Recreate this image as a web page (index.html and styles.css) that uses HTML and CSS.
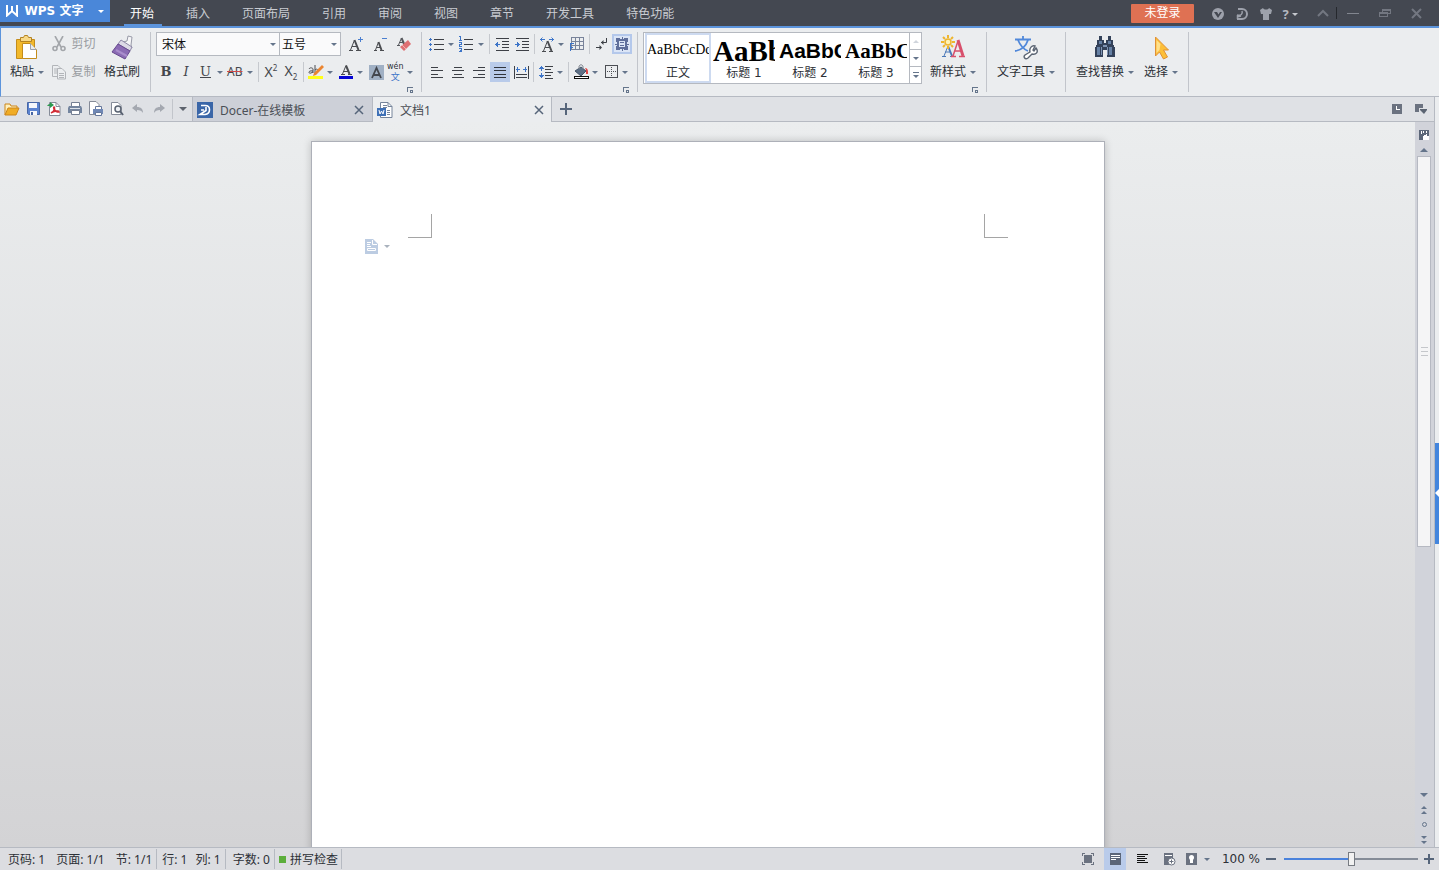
FILE: index.html
```html
<!DOCTYPE html>
<html lang="zh-CN">
<head>
    <meta charset="UTF-8">
    <meta name="viewport" content="width=device-width, initial-scale=1.0">
    <title>文档1 - WPS 文字</title>
    <link rel="stylesheet" href="styles.css">
</head>
<body>

    <header class="titlebar">
        <button class="app-button">
            <svg width="12" height="12" viewBox="0 0 12 12" fill="none" stroke="#fff" stroke-width="2"><path d="M1 0v10.500L6 6l5 4.500V0M6 1v5"/></svg>
            <span>WPS 文字</span>
            <i class="caret caret-white"></i>
        </button>
        <nav class="menu">
            <a href="#" class="active">开始</a>
            <a href="#">插入</a>
            <a href="#">页面布局</a>
            <a href="#">引用</a>
            <a href="#">审阅</a>
            <a href="#">视图</a>
            <a href="#">章节</a>
            <a href="#">开发工具</a>
            <a href="#">特色功能</a>
        </nav>
        <button class="login">未登录</button>
        <div class="title-icons">
            <button aria-label="云服务"><svg width="12" height="12" viewBox="0 0 12 12"><circle cx="6" cy="6" r="6" fill="#9da1ab"/><path d="M2 4h8L6 10z" fill="#444851"/><path d="M5 4h3L6.500 6.500z" fill="#9da1ab"/></svg></button>
            <button aria-label="Docer"><svg width="12" height="12" viewBox="0 0 12 12" fill="none" stroke="#9da1ab"><path d="M2 1h4a4.500 4.500 0 0 1 0 10H1" stroke-width="2"/><path d="M6 3c1 3-1 5-5 4M1 9l4-1M1.500 7v4" stroke-width="1.500"/></svg></button>
            <button aria-label="皮肤"><svg width="12" height="12" viewBox="0 0 12 12"><path d="M0 2l3-2c1 2 5 2 6 0l3 2-1 4H9v6H3V6H1z" fill="#9da1ab"/></svg></button>
            <button class="help" aria-label="帮助"><b>?</b><i class="caret caret-light"></i></button>
        </div>
        <div class="window-icons">
            <button aria-label="收起功能区"><svg width="12" height="12" viewBox="0 0 12 12" fill="none" stroke="#737781" stroke-width="2"><path d="M1 9l5-5 5 5"/></svg></button>
            <i class="title-sep"></i>
            <button aria-label="最小化"><svg width="12" height="12" viewBox="0 0 12 12" shape-rendering="crispEdges"><path d="M0 6h12v1H0z" fill="#82868f"/></svg></button>
            <button aria-label="还原"><svg width="12" height="12" viewBox="0 0 12 12" fill="none" stroke="#737781" shape-rendering="crispEdges"><path d="M3.500 5V2.500h8v4H9M.5 5.500h8v4h-8zM.5 6.500h8M4 3.500h7"/></svg></button>
            <button aria-label="关闭"><svg width="12" height="12" viewBox="0 0 12 12" stroke="#737781" stroke-width="2"><path d="M1 2l9 9M10 2l-9 9"/></svg></button>
        </div>
    </header>

    <section class="ribbon">
        <div class="group group-clipboard">
            <button class="big">
                <svg width="24" height="26" viewBox="0 0 24 26"><path d="M1.500 4.500h18v19h-18z" fill="#f2b92c" stroke="#c48d1c"/><path d="M5.500 2.500h3l1-2h3l1 2h3v4h-11z" fill="#f8d987" stroke="#b58322"/><path d="M7.500 8.500h8l6 6v9h-14z" fill="#fff" stroke="#c48d1c"/><path d="M15.500 8.500v6h6" fill="#e8ebee" stroke="#9ca3ad"/></svg>
                <span>粘贴 <i class="caret"></i></span>
            </button>
            <div class="small-stack">
                <button class="small" disabled>
                    <svg width="14" height="16" viewBox="0 0 14 16" fill="none" stroke="#a3a6aa" stroke-width="1.600"><path d="M3 0l6 11M11 0L5 11"/><circle cx="3" cy="12.500" r="2"/><circle cx="11" cy="12.500" r="2"/></svg>
                    <span>剪切</span>
                </button>
                <button class="small" disabled>
                    <svg width="14" height="16" viewBox="0 0 14 16" fill="#eceef0" stroke="#b2b5b9"><path d="M.5 1.500H6l3 3v8H.5zM2 5h4M2 7h4M2 9h4"/><path d="M5.500 4.500H10l3.500 3.500v7h-8zM7 9.500h5M7 11.500h5M7 13.500h5"/></svg>
                    <span>复制</span>
                </button>
            </div>
            <button class="big">
                <svg width="24" height="26" viewBox="0 0 24 26"><path d="M18 1l4 1-1 8 1 3-9-6 4-1z" fill="#f5f5f7" stroke="#999ba8"/><path d="M11 5l11 7-2 4L8 9z" fill="#dcd9e6" stroke="#8e88a8"/><path d="M8 9l12 7-5 8-13-7z" fill="#8b6bb4" stroke="#67498f"/><path d="M6 15l11 6" stroke="#a98dcc" stroke-width="2"/></svg>
                <span>格式刷</span>
            </button>
        </div>

        <div class="group group-font">
            <div class="row">
                <label class="combo combo-font"><select aria-label="字体"><option>宋体</option></select><i class="caret"></i></label>
                <label class="combo combo-size"><select aria-label="字号"><option>五号</option></select><i class="caret"></i></label>
                <div class="font-steps">
                    <button class="tool" aria-label="增大字号"><svg width="16" height="16" viewBox="0 0 16 16" fill="none" stroke="#4a4c50"><path d="M2.500 14L6.500 4"/><path d="M6.500 4l4 10" stroke-width="2"/><path d="M4 10.500h5M1 14.500h4M8 14.500h5"/><path d="M10 3.500h5M12.500 1v5" stroke="#4a7fd0"/></svg></button>
                    <button class="tool" aria-label="减小字号"><svg width="16" height="16" viewBox="0 0 16 16" fill="none" stroke="#4a4c50"><path d="M3.500 14l3-8"/><path d="M6.500 6l3 8" stroke-width="2"/><path d="M5 11.500h4M2 14.500h3M8 14.500h4"/><path d="M10 2.500h5" stroke="#4a7fd0"/></svg></button>
                    <button class="tool" aria-label="清除格式"><svg width="16" height="16" viewBox="0 0 16 16" fill="none"><path d="M2.500 9l3-7" stroke="#55575c"/><path d="M5.500 2l3 7" stroke="#55575c" stroke-width="2"/><path d="M3 6.500h4M1 9.500h3" stroke="#55575c"/><path d="M12 4l3 4-7 7-4-4z" fill="#df6f72"/><path d="M6 9l4 4" stroke="#f0b0b0"/></svg></button>
                </div>
            </div>
            <div class="row">
                <button class="tool glyph-serif" aria-label="加粗"><b>B</b></button>
                <button class="tool glyph-serif" aria-label="倾斜"><em>I</em></button>
                <button class="tool split glyph-serif" aria-label="下划线"><u>U</u><i class="caret"></i></button>
                <button class="tool split glyph-strike" aria-label="删除线"><s>AB</s><i class="caret"></i></button>
                <i class="sep"></i>
                <button class="tool glyph-script" aria-label="上标"><span>X<sup>2</sup></span></button>
                <button class="tool glyph-script" aria-label="下标"><span>X<sub>2</sub></span></button>
                <i class="sep"></i>
                <button class="tool split" aria-label="突出显示"><svg width="16" height="16" viewBox="0 0 16 16" fill="none"><path d="M1 5c1-2 4-1 4 0v4M5 7c-5-1-5 3-2 2l2-1M7 1v8M7 6c3-3 5 3 0 3" stroke="#4b4d52"/><path d="M14 1l2 2-8 8-3 1 1-3z" fill="#eb8530" /><path d="M0 12h15v3H0z" fill="#ffff19"/></svg><i class="caret"></i></button>
                <button class="tool split" aria-label="字体颜色"><svg width="16" height="16" viewBox="0 0 16 16" fill="none"><path d="M4.500 10L8 1.500" stroke="#4a4c50"/><path d="M8 1.500l3.500 8.500" stroke="#4a4c50" stroke-width="2"/><path d="M5 7.500h6M3 10.500h4M10 10.500h4" stroke="#4a4c50"/><path d="M1 12h14v3H1z" fill="#0505d5"/></svg><i class="caret"></i></button>
                <button class="tool" aria-label="字符底纹"><svg width="16" height="16" viewBox="0 0 16 16"><path d="M1 1h15v15H1z" fill="#a0b0c4"/><path d="M4 14l4.500-10 4.500 10M5.500 11h6" fill="none" stroke="#42464e" stroke-width="1.800"/></svg></button>
                <button class="tool split glyph-pinyin" aria-label="拼音指南"><span>wén<em>文</em></span><i class="caret"></i></button>
            </div>
            <button class="launcher" aria-label="字体设置"><svg width="6" height="6" viewBox="0 0 6 6" fill="none" stroke="#65758b" shape-rendering="crispEdges"><path d="M.5 5V.5H6M3 5.500h2.500V3M3 5V3h3"/></svg></button>
        </div>

        <div class="group group-para">
            <div class="row">
                <button class="tool split" aria-label="项目符号"><svg width="16" height="16" viewBox="0 0 16 16" shape-rendering="crispEdges"><path d="M5 3h10v1H5zM5 8h10v1H5zM5 13h10v1H5z" fill="#3d4046"/><path d="M1 2h1v3H1zM0 3h3v1H0zM1 7h1v3H1zM0 8h3v1H0zM1 12h1v3H1zM0 13h3v1H0z" fill="#3c74c8"/></svg><i class="caret"></i></button>
                <button class="tool split" aria-label="编号"><svg width="16" height="16" viewBox="0 0 16 16" fill="none" shape-rendering="crispEdges"><path d="M5 3.500h9M5 8.500h9M5 13.500h9" stroke="#3d4046"/><path d="M0 .5h1.500v4M0 4.500h3M0 6.500h2.500v2h-2v2H3M0 12.500h2.500v3H0M1 14h1" stroke="#3c74c8"/></svg><i class="caret"></i></button>
                <i class="sep"></i>
                <button class="tool" aria-label="减少缩进"><svg width="16" height="16" viewBox="0 0 16 16" fill="none" shape-rendering="crispEdges"><path d="M2 2.500h13M8 5.500h7M8 8.500h7M8 11.500h7M2 14.500h13" stroke="#3d4046"/><path d="M1 8.500h5M3.500 6v5M2.500 7v3" stroke="#3c74c8"/></svg></button>
                <button class="tool" aria-label="增加缩进"><svg width="16" height="16" viewBox="0 0 16 16" fill="none" shape-rendering="crispEdges"><path d="M2 2.500h13M8 5.500h7M8 8.500h7M8 11.500h7M2 14.500h13" stroke="#3d4046"/><path d="M1 8.500h5M3.500 6v5M4.500 7v3" stroke="#3c74c8"/></svg></button>
                <i class="sep"></i>
                <button class="tool split" aria-label="中文版式"><svg width="16" height="16" viewBox="0 0 16 16" fill="none"><path d="M4.500 15L8.500 5" stroke="#4a4c50"/><path d="M8.500 5l4 10" stroke="#4a4c50" stroke-width="2"/><path d="M6 11.500h5M3 15.500h4M10 15.500h4" stroke="#4a4c50"/><path d="M1 3.500h5M3.500 1.500L1.500 3.500l2 2M10 3.500h5M12.500 1.500l2 2-2 2" stroke="#3c74c8"/></svg><i class="caret"></i></button>
                <button class="tool" aria-label="表格"><svg width="16" height="16" viewBox="0 0 16 16" fill="none" shape-rendering="crispEdges"><path d="M2.500 1.500h12v12h-12zM2 5.500h12M2 9.500h12M6.500 2v12M10.500 2v12" stroke="#79839a"/><path d="M1.500 7v8M1 7.500h4M1 11.500h3" stroke="#3c74c8"/></svg></button>
                <i class="sep"></i>
                <button class="tool" aria-label="段落标记"><svg width="16" height="16" viewBox="0 0 16 16" fill="none" stroke="#3d4046"><path d="M12.500 2v4.500H7M2 11.500h5"/><path d="M9.500 4v5L7 6.500zM5.500 9v5L8 11.500z" fill="#3d4046" stroke="none"/></svg></button>
                <button class="tool pressed" aria-label="段落布局"><svg width="16" height="16" viewBox="0 0 16 16" fill="none" shape-rendering="crispEdges"><path d="M2 2h4v1H3v3H2zM10 2h4v4h-1V3h-3zM2 10h1v3h3v1H2zM13 10h1v4h-4v-1h3z" fill="#5f6f9c"/><path d="M4 4h8v8H4z" stroke="#5f6f9c" stroke-width="2"/><path d="M6 6.500h4M6 9.500h4M1 8h2M13 8h2M8 1v2M8 13v2" stroke="#5f6f9c"/></svg></button>
            </div>
            <div class="row">
                <div class="aligns">
                    <button class="tool" aria-label="左对齐"><svg width="16" height="16" viewBox="0 0 16 16" fill="none" stroke="#3d4046" shape-rendering="crispEdges"><path d="M2 3.500h7M2 6.500h12M2 10.500h7M2 13.500h12"/></svg></button>
                    <button class="tool" aria-label="居中"><svg width="16" height="16" viewBox="0 0 16 16" fill="none" stroke="#3d4046" shape-rendering="crispEdges"><path d="M4 3.500h8M2 6.500h12M4 10.500h8M2 13.500h12"/></svg></button>
                    <button class="tool" aria-label="右对齐"><svg width="16" height="16" viewBox="0 0 16 16" fill="none" stroke="#3d4046" shape-rendering="crispEdges"><path d="M7 3.500h7M2 6.500h12M7 10.500h7M2 13.500h12"/></svg></button>
                    <button class="tool pressed-flat" aria-label="两端对齐"><svg width="16" height="16" viewBox="0 0 16 16" fill="none" stroke="#30343c" shape-rendering="crispEdges"><path d="M2 3.500h12M2 6.500h12M2 10.500h12M2 13.500h12"/></svg></button>
                    <button class="tool" aria-label="分散对齐"><svg width="16" height="16" viewBox="0 0 16 16" fill="none" stroke="#3d4046" shape-rendering="crispEdges"><path d="M1.500 2v13M15.500 2v13M3 10.500h11M3 13.500h11"/><path d="M3 5.500h4M10 5.500h4M4.500 3v5M12.500 3v5" stroke="#3c74c8"/></svg></button>
                </div>
                <i class="sep"></i>
                <button class="tool split" aria-label="行距"><svg width="16" height="16" viewBox="0 0 16 16" fill="none" shape-rendering="crispEdges"><path d="M7 2.500h8M7 5.500h6M7 8.500h8M7 11.500h6M7 14.500h8" stroke="#3d4046"/><path d="M3.500 2v5M3.500 9v5M1 4.500h5M2 3.500h3M1 11.500h5M2 12.500h3" stroke="#3c74c8"/></svg><i class="caret"></i></button>
                <i class="sep"></i>
                <button class="tool split" aria-label="底纹颜色"><svg width="16" height="16" viewBox="0 0 16 16"><path d="M2 7l6-4 5 4-5 5z" fill="#5e7086" stroke="#45556a"/><path d="M6 5V2q2-3 4 0v3" fill="none" stroke="#858b94"/><path d="M12 4q3 0 3 4v2h-2V6z" fill="#dd4545"/><path d="M1.500 12.500h14v2h-14z" fill="#fff" stroke="#111" shape-rendering="crispEdges"/></svg><i class="caret"></i></button>
                <button class="tool split" aria-label="边框"><svg width="16" height="16" viewBox="0 0 16 16" fill="none" stroke="#4b4e54" shape-rendering="crispEdges"><path d="M2.500 1.500h12v12h-12z"/><path d="M8.500 3v10M4 7.500h10" stroke-dasharray="1 1"/></svg><i class="caret"></i></button>
            </div>
            <button class="launcher" aria-label="段落设置"><svg width="6" height="6" viewBox="0 0 6 6" fill="none" stroke="#65758b" shape-rendering="crispEdges"><path d="M.5 5V.5H6M3 5.500h2.500V3M3 5V3h3"/></svg></button>
        </div>

        <div class="group group-styles">
            <div class="styles-row">
                <div class="gallery">
                    <button class="style-item selected"><span class="preview preview-body">AaBbCcDd</span><span>正文</span></button>
                    <button class="style-item"><span class="preview preview-h1">AaBb</span><span>标题 1</span></button>
                    <button class="style-item"><span class="preview preview-h2">AaBbC</span><span>标题 2</span></button>
                    <button class="style-item"><span class="preview preview-h3">AaBbC</span><span>标题 3</span></button>
                    <div class="gallery-scroll">
                        <button disabled aria-label="上一行"><i class="caret caret-up"></i></button>
                        <button aria-label="下一行"><i class="caret"></i></button>
                        <button aria-label="更多样式"><i class="bar"></i><i class="caret"></i></button>
                    </div>
                </div>
                <button class="big">
                    <svg width="24" height="26" viewBox="0 0 24 26" fill="none"><path d="M3 21l4-10" stroke="#4b78b8"/><path d="M7 11l4 10" stroke="#4b78b8" stroke-width="2"/><path d="M4 17h6M1 21.500h4M9 21.500h4" stroke="#4b78b8"/><path d="M12 21l5-15" stroke="#d8506c" stroke-width="1.500"/><path d="M17 5l5 16" stroke="#d8506c" stroke-width="3"/><path d="M14 16h6M10 21.500h5M18 21.500h6" stroke="#d8506c" stroke-width="1.500"/><circle cx="7" cy="7" r="3" fill="#fff3b8" stroke="#eeb52e" stroke-width="1.500"/><path d="M7 0v3M7 11v3M0 7h3M11 7h3M2 2l2 2M10 10l2 2M2 12l2-2M10 4l2-2" stroke="#eeb52e" stroke-width="2"/></svg>
                    <span>新样式 <i class="caret"></i></span>
                </button>
            </div>
            <button class="launcher" aria-label="样式设置"><svg width="6" height="6" viewBox="0 0 6 6" fill="none" stroke="#65758b" shape-rendering="crispEdges"><path d="M.5 5V.5H6M3 5.500h2.500V3M3 5V3h3"/></svg></button>
        </div>

        <div class="group group-tools">
            <button class="big">
                <svg width="24" height="26" viewBox="0 0 24 26" fill="none"><path d="M1 4.500h16M9 1v3M4 5c2 5 5 9 10 11M14 5c-2 6-6 10-13 11" stroke="#5088da" stroke-width="1.800"/><path d="M22 13c3 4 0 7-4 6l-4 4c-3 2-5-1-3-3l5-3c-1-4 2-7 5-6l-2 4 1 1z" fill="#fff" stroke="#5a6472" stroke-width="1.400"/></svg>
                <span>文字工具 <i class="caret"></i></span>
            </button>
        </div>

        <div class="group group-find">
            <button class="big">
                <svg width="24" height="26" viewBox="0 0 24 26"><path d="M6 1h3v4h2v3h2V5h2V1h3v4h2v5h1v2h1v10h-8v-7h-4v7H2V12h1v-2h1V5h2z" fill="#34425a"/><path d="M4 12h3v8H4zM16 12h3v8h-3zM6 6h3v3H6zM15 6h3v3h-3z" fill="#6681a5"/><path d="M8 12h1v8H8zM14 12h1v8h-1zM10 10h4v2h-4z" fill="#7f94b3"/></svg>
                <span>查找替换 <i class="caret"></i></span>
            </button>
            <button class="big">
                <svg width="24" height="26" viewBox="0 0 24 26"><path d="M6.500 2v19l4-4 4 7 4-2-4-7h5z" fill="#fcbf38" stroke="#e09135"/><path d="M7.500 5v13l3-3 1-6z" fill="#ffe08b"/></svg>
                <span>选择 <i class="caret"></i></span>
            </button>
        </div>
    </section>

    <div class="middle">
        <div class="editor">
            <div class="tabbar">
                <div class="quick">
                    <button aria-label="打开"><svg width="16" height="16" viewBox="0 0 16 16"><path d="M1 14V3h5l1 2h6v3" fill="#fff0bd" stroke="#cc851a"/><path d="M1 14l3-7h11l-3 7z" fill="#f0ac25" stroke="#cc851a"/></svg></button>
                    <button aria-label="保存"><svg width="16" height="16" viewBox="0 0 16 16"><path d="M2.500 1.500h12v12h-11l-1-1z" fill="#5b83d0" stroke="#4867a5"/><path d="M4 2h8v5H4zM5 10h7v4H5z" fill="#f5f7fb"/><path d="M6 11h2v3H6z" fill="#4867a5"/></svg></button>
                    <button aria-label="输出为PDF"><svg width="16" height="16" viewBox="0 0 16 16" fill="none"><path d="M3.500 1.500H10l4 4v9H3.500z" fill="#fff" stroke="#858b98"/><path d="M10 1.500v4h4" stroke="#858b98"/><path d="M5 12c4-2 4-6 3-6s0 5 5 5c0-2-5-1-8 1" stroke="#d12b35" stroke-width="1.500"/><path d="M1 5q1-2 3-2V1l4 3-4 3V5z" fill="#2d9850"/></svg></button>
                    <button aria-label="打印"><svg width="16" height="16" viewBox="0 0 16 16"><path d="M4.500 1.500h8v4h-8z" fill="#fff" stroke="#747f93"/><path d="M2 5h12l1 2v5H1V7z" fill="#74859f"/><path d="M3 7h10v1H3z" fill="#dce2ea"/><path d="M4.500 9.500h8v4h-8z" fill="#fff" stroke="#747f93"/></svg></button>
                    <button aria-label="打印预览"><svg width="16" height="16" viewBox="0 0 16 16"><path d="M1.500.5H8l3 3v10H1.500z" fill="#fff" stroke="#858b98"/><path d="M7.500 5.500h6v3h-6z" fill="#fff" stroke="#65779b"/><path d="M5 8h10v5H5z" fill="#6f87b5"/><path d="M7.500 11.500h6v3h-6z" fill="#fff" stroke="#65779b"/></svg></button>
                    <button aria-label="查找"><svg width="16" height="16" viewBox="0 0 16 16"><path d="M2.500 1.500H9l3 3v9H2.500z" fill="#fff" stroke="#858b98"/><circle cx="9" cy="8" r="3" fill="#eef1f5" stroke="#596271" stroke-width="1.500"/><path d="M11 10l3 4" stroke="#596271" stroke-width="2"/></svg></button>
                    <button aria-label="撤销"><svg width="16" height="16" viewBox="0 0 16 16"><path d="M2 7l5-4v3c4 0 6 2 6 6-1-2-3-3-6-3v2z" fill="#a4a8b0"/></svg></button>
                    <button aria-label="恢复"><svg width="16" height="16" viewBox="0 0 16 16"><path d="M14 7L9 3v3c-4 0-6 2-6 6 1-2 3-3 6-3v2z" fill="#a4a8b0"/></svg></button>
                </div>
                <button class="quick-more" aria-label="自定义快速访问"><i class="caret caret-dark"></i></button>
                <div class="tab">
                    <svg width="16" height="16" viewBox="0 0 16 16"><path d="M0 0h16v16H0z" fill="#3a66a8"/><path d="M4 3.500h4c6 0 6 8 0 9H3l6-4V5M4 8h3" fill="none" stroke="#fff" stroke-width="1.600"/></svg>
                    <span>Docer-在线模板</span>
                    <button class="close" aria-label="关闭标签"><svg width="10" height="10" viewBox="0 0 10 10" stroke="#56657a" stroke-width="1.500"><path d="M1 1l8 8M9 1L1 9"/></svg></button>
                </div>
                <div class="tab tab-active">
                    <svg width="16" height="16" viewBox="0 0 16 16"><path d="M3.500.5H11l4 4v11H3.500z" fill="#fff" stroke="#76859b"/><path d="M11 .5v4h4M6 3.500h4M6 5.500h4M10 8.500h3M10 10.500h3M10 12.500h3" fill="none" stroke="#76859b"/><path d="M0 6h9v8H0z" fill="#3f71b7"/><path d="M2 8l1 4 1.500-3L6 12l1-4" fill="none" stroke="#fff"/></svg>
                    <span>文档1</span>
                    <button class="close" aria-label="关闭标签"><svg width="10" height="10" viewBox="0 0 10 10" stroke="#56657a" stroke-width="1.500"><path d="M1 1l8 8M9 1L1 9"/></svg></button>
                </div>
                <button class="new-tab" aria-label="新建标签"><svg width="12" height="12" viewBox="0 0 12 12" shape-rendering="crispEdges"><path d="M5 0h2v5h5v2H7v5H5V7H0V5h5z" fill="#56657a"/></svg></button>
                <div class="tabbar-right">
                    <button aria-label="历史"><svg width="12" height="12" viewBox="0 0 12 12" shape-rendering="crispEdges"><path d="M1 1h10v10H1z" fill="#6b7280"/><path d="M5 3h1v3h3v1H5z" fill="#fff"/></svg></button>
                    <button aria-label="标签列表"><svg width="12" height="12" viewBox="0 0 12 12"><path d="M0 1h8v4H4v4H0z" fill="#6b7280"/><path d="M5 6h7v1l-3 4-4-4z" fill="#5b6472"/></svg></button>
                </div>
            </div>

            <div class="workspace">
                <main class="canvas">
                    <div class="page">
                        <div class="crop-marks"><i class="crop crop-left"></i><i class="crop crop-right"></i></div>
                        <button class="para-handle" aria-label="段落柄">
                            <svg width="13" height="15" viewBox="0 0 13 15"><path d="M0 0h8l5 5v10H0z" fill="#bccce2"/><path d="M7.500 1v4.500H12M2 3.500h4M2 5.500h3M2 7.500h4M2.500 9.500h8v2h-8z" fill="none" stroke="#fff"/></svg>
                            <i class="caret caret-pale"></i>
                        </button>
                    </div>
                </main>
                <aside class="scrollbar">
                    <button class="ruler" aria-label="标尺"><svg width="12" height="12" viewBox="0 0 12 12" shape-rendering="crispEdges"><path d="M1 1h10v10H1z" fill="#5c6779"/><path d="M3 2h1v3H3zM5 2h1v2H5zM8 2h1v2H8z" fill="#fff"/><path d="M5 11V7h1V6h2V5h1v2h2v4z" fill="#fff"/></svg></button>
                    <button class="step" aria-label="向上滚动"><i class="caret caret-up"></i></button>
                    <div class="track"><div class="thumb"><i></i><i></i><i></i></div></div>
                    <button class="step" aria-label="向下滚动"><i class="caret"></i></button>
                    <button aria-label="上一页"><i class="caret caret-up"></i><i class="caret caret-up"></i></button>
                    <button aria-label="选择浏览对象"><i class="ring"></i></button>
                    <button aria-label="下一页"><i class="caret"></i><i class="caret"></i></button>
                </aside>
            </div>
        </div>
        <div class="side-strip"><button aria-label="展开任务窗格"><svg width="4" height="8" viewBox="0 0 4 8"><path d="M4 0v8L0 4z" fill="#fff"/></svg></button></div>
    </div>

    <footer class="statusbar">
        <div class="status-cell cell-page"><span>页码: 1</span><span>页面: 1/1</span><span>节: 1/1</span></div>
        <div class="status-cell cell-pos"><span>行: 1</span><span>列: 1</span></div>
        <div class="status-cell cell-count"><span>字数: 0</span></div>
        <div class="status-cell cell-spell"><i></i><span>拼写检查</span></div>
        <div class="views">
            <button aria-label="全屏"><svg width="14" height="14" viewBox="0 0 14 14" shape-rendering="crispEdges"><path d="M3 3h8v8H3z" fill="#6b7280"/><path d="M1.500 4V1.500H4M10 1.500h2.500V4M1.500 10v2.500H4M10 12.500h2.500V10" fill="none" stroke="#6b7280"/></svg></button>
            <button class="on" aria-label="页面视图"><svg width="14" height="14" viewBox="0 0 14 14" shape-rendering="crispEdges"><path d="M2 1h11v12H2z" fill="#5b6679"/><path d="M3 3.500h9M3 5.500h9M3 7.500h5" stroke="#fff"/></svg></button>
            <button aria-label="大纲"><svg width="14" height="14" viewBox="0 0 14 14" stroke="#111" shape-rendering="crispEdges"><path d="M2 2.500h11M2 4.500h8M2 6.500h10M2 8.500h8M2 10.500h11"/></svg></button>
            <button aria-label="Web版式"><svg width="14" height="14" viewBox="0 0 14 14"><path d="M2 1h9v12H2z" fill="#6b7280"/><path d="M3 3.500h7" stroke="#fff"/><circle cx="9.500" cy="9.500" r="3.500" fill="#fff" stroke="#6b7280"/><path d="M7.500 9.500h4M9.500 7.500v4" stroke="#6b7280"/></svg></button>
            <button class="view-eye" aria-label="护眼模式"><svg width="14" height="14" viewBox="0 0 14 14"><path d="M1 1h11v12H1z" fill="#6b7280"/><circle cx="6.500" cy="5.500" r="2.500" fill="#fff"/><path d="M5 7h3v4H5z" fill="#fff"/></svg><i class="caret"></i></button>
        </div>
        <div class="zoom">
            <label for="zoom">100 %</label>
            <button aria-label="缩小"><svg width="10" height="10" viewBox="0 0 10 10" shape-rendering="crispEdges"><path d="M0 4h10v2H0z" fill="#56657a"/></svg></button>
            <input type="range" id="zoom" min="0" max="200" value="100">
            <button aria-label="放大"><svg width="10" height="10" viewBox="0 0 10 10" shape-rendering="crispEdges"><path d="M4 0h2v4h4v2H6v4H4V6H0V4h4z" fill="#56657a"/></svg></button>
        </div>
    </footer>

</body>
</html>
```

FILE: styles.css
```css
* {
    box-sizing: border-box;
}

body {
    margin: 0;
    height: 100vh;
    display: flex;
    flex-direction: column;
    overflow: hidden;
    background: #ebedef;
    color: #2c3036;
    font-family: "Noto Sans", "Noto Sans CJK SC", sans-serif;
    font-size: 12px;
    line-height: 16px;
}

button {
    display: flex;
    align-items: center;
    justify-content: center;
    margin: 0;
    padding: 0;
    border: none;
    background: none;
    color: inherit;
    font: inherit;
    white-space: nowrap;
}

svg {
    display: block;
    flex: none;
}

/* small drop-down arrows */
.caret {
    display: inline-block;
    flex: none;
    width: 0;
    height: 0;
    border: 3px solid transparent;
    border-top-color: #65758b;
    border-bottom: none;
}

.caret-up {
    border-top: none;
    border-bottom: 3px solid #65758b;
}

.caret-white {
    border-top-color: #fff;
}

.caret-light {
    border-top-color: #c5c8ce;
}

.caret-dark {
    border-width: 4px 4px 0;
    border-top-color: #5d636d;
}

.caret-pale {
    border-top-color: #a9b2bd;
}

/* title bar */
.titlebar {
    display: flex;
    flex: none;
    align-items: center;
    height: 28px;
    background: #444851;
    border-bottom: 2px solid #5c94dc;
}

.app-button {
    align-self: flex-start;
    gap: 7px;
    width: 110px;
    height: 22px;
    background: #4a87d9;
    color: #fff;
    font-family: "DejaVu Sans", "Noto Sans CJK SC", sans-serif;
    font-weight: bold;
}

.app-button .caret {
    margin-left: 8px;
}

.menu {
    display: flex;
    flex: 1;
    align-self: stretch;
    padding-left: 5px;
}

.menu a {
    margin: 0 9px;
    padding: 6px 8px 2px 6px;
    border-bottom: 2px solid transparent;
    color: #c9ccd2;
    text-decoration: none;
    white-space: nowrap;
}

.menu a.active {
    border-color: #5c94dc;
    color: #fff;
}

.login {
    width: 63px;
    height: 19px;
    border-radius: 1px;
    background: #df7153;
    color: #fff;
}

.title-icons {
    display: flex;
    padding: 2px 8px 0 12px;
}

.title-icons button {
    width: 24px;
}

.title-icons .help {
    gap: 3px;
    color: #b4b8c0;
    font-size: 13px;
}

.window-icons {
    display: flex;
    align-items: center;
    padding-right: 6px;
}

.window-icons button {
    width: 32px;
}

.window-icons button:first-child {
    width: 26px;
}

.title-sep {
    width: 1px;
    height: 12px;
    background: #25282d;
}

/* ribbon */
.ribbon {
    display: flex;
    flex: none;
    height: 69px;
    padding: 4px 0;
    background: #ebedef;
    border-left: 1px solid #5c94dc;
    border-bottom: 1px solid #b6bac2;
}

.group {
    display: flex;
    flex: none;
    border-right: 1px solid #c2c5cb;
}

.group-clipboard {
    width: 150px;
    padding: 0 10px 0 9px;
    justify-content: space-between;
}

.group-font,
.group-para,
.group-styles {
    flex-direction: column;
    padding: 0 5px;
}

.group-font {
    width: 271px;
}

.group-para {
    width: 216px;
}

.group-styles {
    width: 349px;
}

.group-tools {
    padding: 0 10px;
}

.group-find {
    gap: 10px;
    padding: 0 10px;
}

.row {
    display: flex;
    flex: none;
    align-items: center;
    height: 24px;
}

.row + .row {
    margin-top: 4px;
}

.big {
    flex-direction: column;
    justify-content: flex-start;
    align-self: flex-start;
    gap: 3px;
    height: 52px;
    padding-top: 3px;
}

.big span {
    display: flex;
    align-items: center;
    gap: 4px;
}

.small-stack {
    display: flex;
    flex-direction: column;
    gap: 4px;
}

.small {
    gap: 5px;
    height: 24px;
    color: #999ca1;
}

.tool {
    flex: none;
    width: 20px;
    height: 20px;
}

.split {
    width: 28px;
    margin-right: 2px;
    justify-content: flex-start;
    padding-left: 2px;
}

.split .caret {
    margin-left: auto;
    margin-right: 1px;
}

.pressed {
    background: #dbe5f6;
    border: 2px solid #b4c8eb;
}

.pressed-flat {
    background: #b9cbea;
}

.sep {
    width: 1px;
    height: 20px;
    margin: 0 2px;
    background: #c6c9ce;
}

.combo {
    position: relative;
    height: 24px;
}

.combo select {
    appearance: none;
    width: 100%;
    height: 24px;
    padding: 1px 5px 0;
    border: 1px solid #b5b9c0;
    border-radius: 0;
    background: #fafafb;
    color: #111;
    font: inherit;
}

.combo-font {
    width: 124px;
}

.combo-size {
    width: 62px;
    margin-left: -1px;
}

.combo-size select {
    padding: 1px 2px 0;
}

.combo .caret {
    position: absolute;
    right: 4px;
    top: 11px;
}

.font-steps {
    display: flex;
    gap: 4px;
    padding-left: 5px;
}

.glyph-serif {
    color: #44474c;
    font-family: "DejaVu Serif", serif;
    font-size: 13px;
}

.glyph-serif u {
    padding-left: 2px;
}

.glyph-strike {
    color: #44474c;
    font-size: 12px;
    padding-left: 0;
}

.glyph-strike s {
    padding-left: 1px;
    text-decoration-color: #d04848;
}

.glyph-script {
    color: #44474c;
    font-size: 14px;
}

.glyph-script sup,
.glyph-script sub {
    font-size: 8px;
    line-height: 8px;
}

.glyph-pinyin {
    padding-left: 1px;
}

.glyph-pinyin span {
    display: flex;
    flex-direction: column;
    align-items: center;
    font-family: "DejaVu Sans", sans-serif;
    font-size: 8px;
    line-height: 9px;
}

.glyph-pinyin em {
    color: #3c74c8;
    font-family: "Noto Sans CJK SC", sans-serif;
    font-size: 9px;
    font-style: normal;
    line-height: 11px;
}

.aligns {
    display: flex;
    gap: 1px;
}

.launcher {
    flex: none;
    align-self: flex-end;
    width: 12px;
    height: 6px;
    margin-top: 3px;
}

/* style gallery */
.styles-row {
    display: flex;
    gap: 8px;
}

.gallery {
    display: flex;
    width: 279px;
    height: 52px;
    padding-left: 1px;
    background: #fff;
    border: 1px solid #b5b9c0;
}

.style-item {
    flex: 1;
    flex-direction: column;
    justify-content: flex-end;
    min-width: 0;
    height: 50px;
    border: 2px solid transparent;
    overflow: hidden;
    font-family: "DejaVu Sans", "Noto Sans CJK SC", sans-serif;
}

.style-item.selected {
    border-color: #cddaf0;
}

.preview {
    width: 100%;
    height: 30px;
    overflow: hidden;
    color: #000;
    line-height: 30px;
    text-align: left;
}

.preview-body {
    font-family: "Liberation Serif", serif;
    font-size: 14px;
}

.preview-h1 {
    font: bold 29px/32px "Liberation Serif", serif;
}

.preview-h2 {
    font: bold 21px/32px "Liberation Sans", sans-serif;
}

.preview-h3 {
    font: bold 21px/32px "Liberation Serif", serif;
}

.gallery-scroll {
    display: flex;
    flex-direction: column;
    width: 12px;
    border-left: 1px solid #b5b9c0;
}

.gallery-scroll button {
    flex: 1;
    flex-direction: column;
    gap: 2px;
    border-bottom: 1px solid #b5b9c0;
}

.gallery-scroll button:last-child {
    border-bottom: none;
}

.gallery-scroll button:disabled .caret {
    opacity: 0.3;
}

.bar {
    width: 6px;
    height: 1px;
    background: #65758b;
}

/* document tabs */
.middle {
    display: flex;
    flex: 1;
    min-height: 0;
}

.editor {
    display: flex;
    flex: 1;
    flex-direction: column;
    min-width: 0;
    border-right: 1px solid #b6bac2;
}

.tabbar {
    display: flex;
    flex: none;
    height: 25px;
    background: #dfe1e5;
    border-bottom: 1px solid #b6bac2;
}

.quick {
    display: flex;
    align-items: center;
    gap: 5px;
    padding: 0 5px 0 4px;
}

.quick-more {
    align-self: center;
    width: 20px;
    height: 20px;
    border-left: 1px solid #c2c5cb;
}

.tab {
    display: flex;
    align-items: center;
    width: 180px;
    padding: 2px 6px 0 4px;
    gap: 7px;
    background: #cdd0d8;
    border-left: 1px solid #b6bac2;
    color: #4b4f56;
}

.tab span {
    padding-top: 1px;
}

.tab-active {
    height: 25px;
    padding: 2px 5px 1px 4px;
    background: #ebedef;
    border-right: 1px solid #b6bac2;
}

.close {
    margin-left: auto;
    width: 14px;
    height: 14px;
}

.new-tab {
    width: 28px;
}

.tabbar-right {
    display: flex;
    margin-left: auto;
    gap: 12px;
    padding-right: 7px;
}

/* work area */
.workspace {
    display: flex;
    flex: 1;
    min-height: 0;
}

.canvas {
    flex: 1;
    padding-top: 19px;
    overflow: hidden;
    background: linear-gradient(#ebedee, #d3d3d5);
}

.page {
    width: 794px;
    height: 1123px;
    margin: 0 auto;
    padding-top: 72px;
    background: #fff;
    border: 1px solid #adb0b8;
    box-shadow: 0 0 8px rgba(0, 0, 0, 0.2);
}

.crop-marks {
    display: flex;
    justify-content: space-between;
    padding: 0 96px;
}

.crop {
    width: 24px;
    height: 24px;
    border-bottom: 1px solid #a5a5a5;
}

.crop-left {
    border-right: 1px solid #a5a5a5;
}

.crop-right {
    border-left: 1px solid #a5a5a5;
}

.para-handle {
    gap: 6px;
    margin: 1px 0 0 53px;
}

.scrollbar {
    display: flex;
    flex: none;
    flex-direction: column;
    width: 19px;
    background: #d1d3da;
}

.scrollbar button {
    flex-direction: column;
    flex: none;
    gap: 2px;
    height: 15px;
    padding-right: 1px;
}

.scrollbar .ruler {
    height: 22px;
    padding-top: 3px;
}

.scrollbar .ruler + .step {
    height: 12px;
}

.step .caret {
    border-width: 4px 4px 0;
}

.step .caret-up {
    border-width: 0 4px 4px;
}

.track {
    flex: 1;
    padding: 0 3px 0 2px;
}

.thumb {
    display: flex;
    flex-direction: column;
    align-items: center;
    justify-content: center;
    gap: 3px;
    height: 62%;
    background: #f5f5f6;
    border: 1px solid #b6b9c2;
}

.thumb i {
    width: 7px;
    height: 1px;
    background: #c5c7cb;
}

.ring {
    width: 5px;
    height: 5px;
    border: 1px solid #65758b;
    border-radius: 50%;
}

.side-strip {
    display: flex;
    flex: none;
    align-items: center;
    width: 4px;
    padding-top: 42px;
}

.side-strip button {
    width: 4px;
    height: 101px;
    background: #4385dd;
}

/* status bar */
.statusbar {
    display: flex;
    flex: none;
    align-items: center;
    height: 23px;
    background: #dcdde1;
    border-top: 1px solid #b6bac2;
}

.status-cell {
    display: flex;
    align-items: center;
    height: 20px;
    padding-top: 1px;
    border-right: 1px solid #b6bac2;
    white-space: nowrap;
}

.cell-page {
    gap: 11px;
    padding-left: 8px;
    padding-right: 4px;
}

.cell-pos {
    gap: 8px;
    padding-left: 5px;
    padding-right: 4px;
}

.cell-count {
    padding-left: 7px;
    padding-right: 4px;
}

.cell-spell {
    gap: 4px;
    padding-left: 4px;
    padding-right: 3px;
}

.cell-spell i {
    width: 7px;
    height: 7px;
    background: #5cae3c;
}

.views {
    display: flex;
    align-self: stretch;
    gap: 5px;
    margin-left: auto;
}

.views button {
    width: 22px;
}

.views .on {
    background: #b9cbea;
}

.views .view-eye {
    width: 25px;
    gap: 5px;
}

.zoom {
    display: flex;
    align-items: center;
    gap: 6px;
    padding: 0 5px 0 12px;
}

.zoom label {
    font-family: "DejaVu Sans", sans-serif;
    white-space: nowrap;
}

.zoom button {
    width: 10px;
}

.zoom input {
    appearance: none;
    width: 134px;
    height: 14px;
    margin: 0 0 0 2px;
    background: linear-gradient(90deg, #4a82dc 50%, #858c98 50%) center / 100% 2px no-repeat;
}

.zoom input::-webkit-slider-thumb {
    appearance: none;
    width: 7px;
    height: 14px;
    background: #f2f2f2;
    border: 1px solid #777b82;
}
```
